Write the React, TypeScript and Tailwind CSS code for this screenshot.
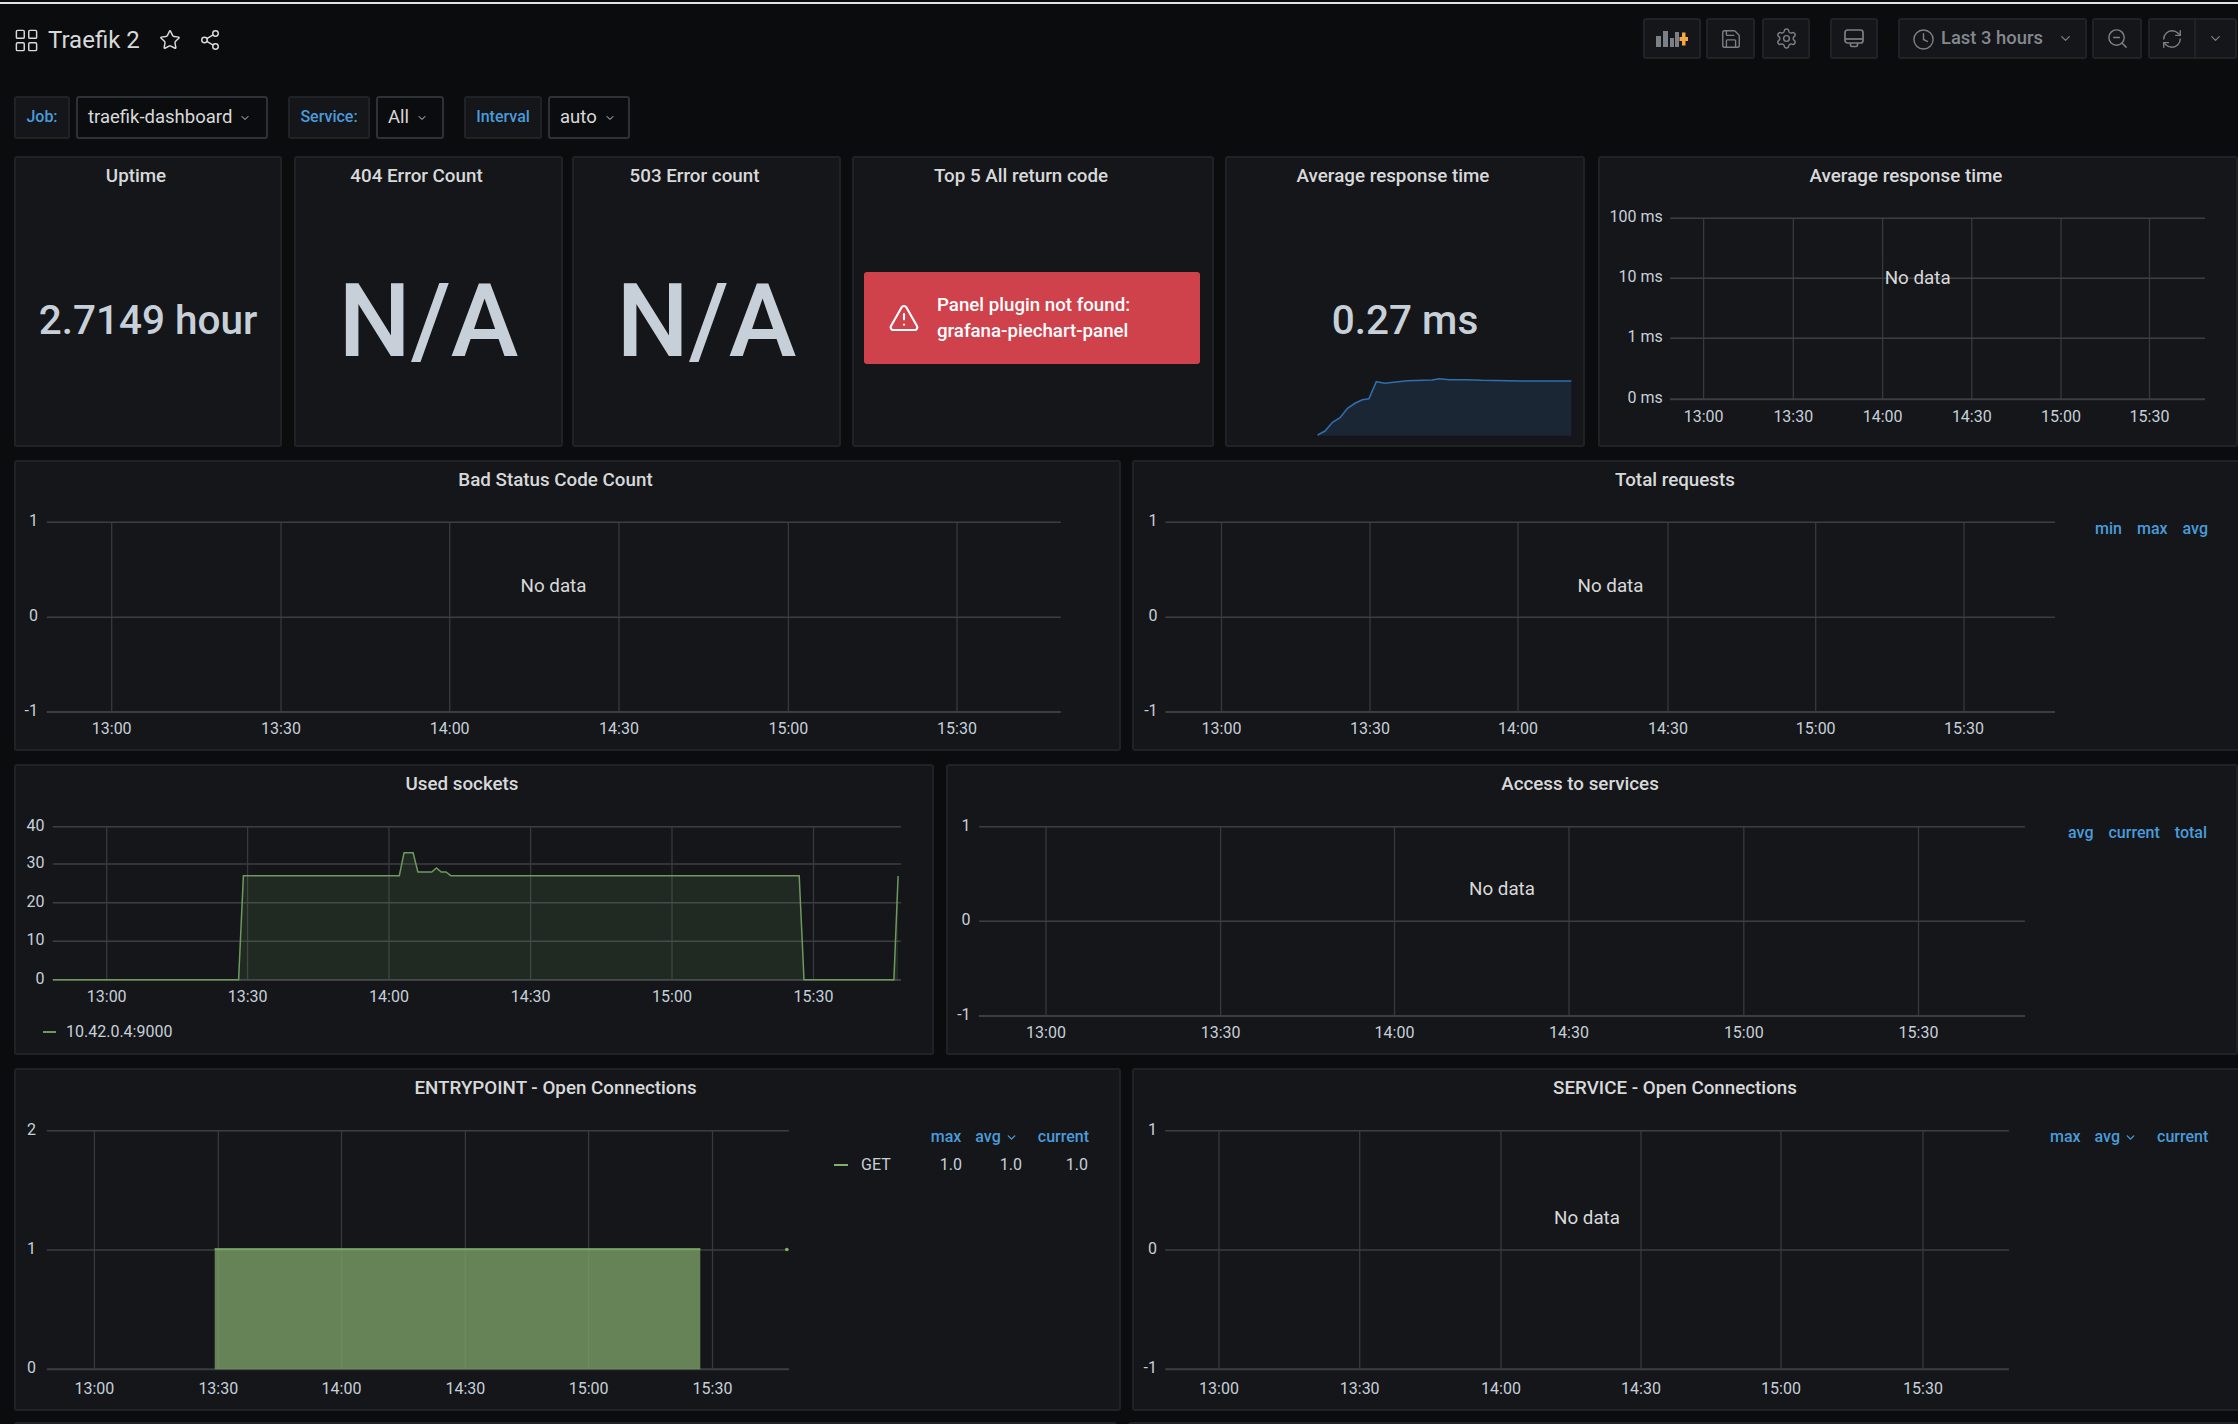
import React from 'react';
import {
  ChevronDown,
  Clock,
  LayoutGrid,
  RefreshCw,
  Save,
  Settings,
  Share2,
  Star,
  TriangleAlert,
  ZoomOut,
} from 'lucide-react';

const TIMES = ['13:00', '13:30', '14:00', '14:30', '15:00', '15:30'];

// chart coordinates are page pixels, each svg's viewBox starts where it sits on the page
const SPARK_LINE: [number, number][] = [
  [1317.6, 435], [1325, 431], [1332.5, 422.3], [1340, 417.7], [1347.5, 408.3], [1355, 403.3],
  [1362.4, 399.7], [1368.9, 398.7], [1376.3, 381.7], [1384.8, 383.3], [1407.2, 380.7], [1432, 380],
  [1439.5, 378.7], [1449.5, 379.7], [1466.9, 379.7], [1481.8, 380.3], [1521.6, 381], [1571.3, 381],
];

const SOCKETS_LINE: [number, number][] = [
  [52.8, 979.7], [238.6, 979.7], [243.4, 875.7], [399.3, 875.7], [404.1, 852.7], [413.1, 852.7],
  [417.9, 872], [431.7, 872], [436.5, 868], [441.2, 872], [446, 872], [450.8, 875.7],
  [799.2, 875.7], [804, 979.7], [893.9, 979.7], [898.1, 876],
];

const toPoints = (pts: [number, number][]) => pts.map(([x, y]) => `${x},${y}`).join(' ');

interface TimeChartProps {
  ox: number;
  oy: number;
  w: number;
  h: number;
  left: number;
  right: number;
  xs: number[];
  ys: { y: number; label: string }[];
  labelRight: number;
  labelY: number;
  noData?: [number, number];
  children?: React.ReactNode;
}

const TimeChart: React.FC<TimeChartProps> = ({ ox, oy, w, h, left, right, xs, ys, labelRight, labelY, noData, children }) => {
  const top = ys[0].y;
  const bottom = ys[ys.length - 1].y;
  return (
    <svg className="block shrink-0" width={w} height={h} viewBox={`${ox} ${oy} ${w} ${h}`}>
      {xs.map((x) => (
        <line key={x} x1={x} x2={x} y1={top} y2={bottom} stroke="#37393c" strokeWidth={1.3} />
      ))}
      {ys.map((t, i) => (
        <line
          key={t.label}
          x1={left}
          x2={right}
          y1={t.y}
          y2={t.y}
          stroke="#3c3e41"
          strokeWidth={i === ys.length - 1 ? 2 : 1.6}
        />
      ))}
      {children}
      {ys.map((t) => (
        <text key={t.label} x={labelRight} y={t.y - 1.5} textAnchor="end" dominantBaseline="central" fontSize={16} fill="#c7d0d9">
          {t.label}
        </text>
      ))}
      {xs.map((x, i) => (
        <text key={x} x={x} y={labelY} textAnchor="middle" dominantBaseline="central" fontSize={16} fill="#c7d0d9">
          {TIMES[i]}
        </text>
      ))}
      {noData && (
        <text x={noData[0]} y={noData[1]} textAnchor="middle" dominantBaseline="central" fontSize={18.8} fill="#d8d9da">
          No data
        </text>
      )}
    </svg>
  );
};

const Panel: React.FC<{ title: string; className: string; children?: React.ReactNode }> = ({ title, className, children }) => (
  <section className={`flex shrink-0 flex-col overflow-hidden rounded-[3px] border-2 border-[#202226] bg-[#141619] ${className}`}>
    <h2 className="h-[36px] shrink-0 pr-[24px] text-center text-[18.8px] font-medium leading-[36px] text-[#d8d9da]">{title}</h2>
    {children}
  </section>
);

const LegendHead: React.FC<{ items: string[]; pr: string; sorted?: boolean }> = ({ items, pr, sorted }) => (
  <div className={`flex h-[24px] items-center justify-end text-[16px] font-medium text-[#4a9bdb] ${pr}`}>
    {items.map((item) => (
      <span key={item} className={sorted && item === 'avg' ? 'ml-[14px] mr-[20px] flex items-center' : sorted && item === 'current' ? '' : item === items[0] ? '' : 'ml-[15px]'}>
        {item}
        {sorted && item === 'avg' && <ChevronDown size={13} strokeWidth={2.5} className="ml-[4px]" />}
      </span>
    ))}
  </div>
);

const ToolButton: React.FC<{ className: string; children: React.ReactNode }> = ({ className, children }) => (
  <div className={`flex h-[41px] items-center justify-center rounded-[3px] border-2 border-[#202226] bg-[#141619] text-[#7b8087] ${className}`}>
    {children}
  </div>
);

const VarLabel: React.FC<{ className: string; children: React.ReactNode }> = ({ className, children }) => (
  <div className={`flex h-[43px] items-center justify-center rounded-[3px] border-2 border-[#202226] bg-[#141619] pb-[2px] text-[16px] font-medium text-[#4a9bdb] ${className}`}>
    {children}
  </div>
);

const VarSelect: React.FC<{ className: string; children: React.ReactNode }> = ({ className, children }) => (
  <div className={`ml-[6px] flex h-[43px] items-center rounded-[3px] border-2 border-[#2c3235] bg-[#0b0c0e] pl-[10px] text-[18.5px] text-[#d8d9da] ${className}`}>
    {children}
    <ChevronDown size={12} strokeWidth={2} className="ml-[7px] text-[#c7d0d9]" />
  </div>
);

const StatValue: React.FC<{ children: React.ReactNode }> = ({ children }) => (
  <div className="mt-[101px] text-center text-[40.5px] font-medium leading-[50px] text-[#c7d0d9]">{children}</div>
);

const NotAvailable = () => (
  <div className="mt-[67px] text-center text-[102px] font-medium leading-[120px] text-[#c7d0d9]">N/A</div>
);

const AddPanelIcon = () => (
  <svg width="32" height="16" viewBox="0 0 32 16">
    <rect x="0" y="5" width="5" height="11" fill="#7b8087" />
    <rect x="7" y="0" width="5" height="16" fill="#7b8087" />
    <rect x="14" y="7" width="4" height="9" fill="#7b8087" />
    <rect x="19" y="1" width="4" height="15" fill="#7b8087" />
    <path d="M23.500 6H32v4h-8.500zM26 1.500h3.500v13H26z" fill="#f5a742" />
  </svg>
);

const CycleViewIcon = () => (
  <svg width="20" height="19" viewBox="0 0 20 19" fill="none" stroke="currentColor" strokeWidth="1.700">
    <rect x="1" y="1" width="18" height="13" rx="2.500" />
    <path d="M1 10h18" />
    <path d="M6.500 14v2a1.500 1.500 0 0 0 1.500 1.500h4a1.500 1.500 0 0 0 1.500-1.500v-2" />
  </svg>
);

export default function App() {
  return (
    <div className="flex h-[1424px] flex-col overflow-hidden bg-[#0b0c0e] font-[Roboto,sans-serif]">
      <div className="h-[2px] shrink-0 bg-[#0b0c0e]" />
      <div className="h-[2px] shrink-0 bg-[#e4e4e4]" />

      <header className="flex h-[55px] shrink-0 items-start pt-[14px]">
        <div className="ml-[16px] flex h-[44px] items-center text-[#d8d9da]">
          <LayoutGrid size={27} strokeWidth={1.3} className="-ml-[3px]" />
          <h1 className="ml-[8px] text-[24px] leading-none">Traefik 2</h1>
          <Star size={22} strokeWidth={1.6} className="ml-[19px]" />
          <Share2 size={22} strokeWidth={1.6} className="ml-[18px]" />
        </div>
        <div className="ml-auto flex pr-[1px]">
          <ToolButton className="w-[58px]"><AddPanelIcon /></ToolButton>
          <ToolButton className="ml-[5px] w-[49px]"><Save size={22} strokeWidth={1.5} /></ToolButton>
          <ToolButton className="ml-[7px] w-[48px]"><Settings size={23} strokeWidth={1.5} /></ToolButton>
          <ToolButton className="ml-[20px] w-[48px]"><CycleViewIcon /></ToolButton>
          <ToolButton className="ml-[20px] w-[189px] !justify-start pl-[12px]">
            <Clock size={23} strokeWidth={1.5} className="mt-[2px]" />
            <span className="ml-[6px] pb-[2px] text-[18.4px] font-medium text-[#85898f]">Last 3 hours</span>
            <ChevronDown size={15} strokeWidth={2} className="ml-auto mr-[12px]" />
          </ToolButton>
          <ToolButton className="ml-[5px] w-[50px]"><ZoomOut size={23} strokeWidth={1.5} /></ToolButton>
          <ToolButton className="ml-[6px] w-[48px] rounded-r-none"><RefreshCw size={22} strokeWidth={1.5} /></ToolButton>
          <ToolButton className="-ml-[2px] w-[43px] rounded-l-none"><ChevronDown size={15} strokeWidth={2} /></ToolButton>
        </div>
      </header>

      <div className="ml-[14px] mt-[37px] flex shrink-0">
        <VarLabel className="w-[56px]">Job:</VarLabel>
        <VarSelect className="w-[192px]">traefik-dashboard</VarSelect>
        <VarLabel className="ml-[20px] w-[82px]">Service:</VarLabel>
        <VarSelect className="w-[68px]">All</VarSelect>
        <VarLabel className="ml-[20px] w-[78px]">Interval</VarLabel>
        <VarSelect className="w-[82px]">auto</VarSelect>
      </div>

      <div className="mt-[17px] flex h-[291px] shrink-0">
        <Panel title="Uptime" className="ml-[14px] w-[268px]">
          <StatValue>2.7149 hour</StatValue>
        </Panel>
        <Panel title="404 Error Count" className="ml-[12px] w-[269px]">
          <NotAvailable />
        </Panel>
        <Panel title="503 Error count" className="ml-[9px] w-[269px]">
          <NotAvailable />
        </Panel>
        <Panel title="Top 5 All return code" className="ml-[11px] w-[362px]">
          <div className="ml-[10px] mt-[78px] flex h-[92px] w-[336px] items-center rounded-[3px] bg-[#cf414b] pl-[24px] text-[18.7px] font-medium leading-[26px] text-white">
            <TriangleAlert size={32} strokeWidth={1.6} />
            <div className="ml-[17px]">
              <div>Panel plugin not found:</div>
              <div>grafana-piechart-panel</div>
            </div>
          </div>
        </Panel>
        <Panel title="Average response time" className="ml-[11px] w-[360px]">
          <StatValue>0.27 ms</StatValue>
          <svg className="block shrink-0" width="356" height="100" viewBox="1227 345 356 100">
            <polygon points={`${toPoints(SPARK_LINE)} 1571.3,435.7 1317.6,435.7`} fill="#1b2634" />
            <polyline points={toPoints(SPARK_LINE)} fill="none" stroke="#2f6fad" strokeWidth={1.6} />
          </svg>
        </Panel>
        <Panel title="Average response time" className="ml-[13px] w-[640px]">
          <TimeChart
            ox={1600}
            oy={194}
            w={636}
            h={251}
            left={1670}
            right={2205}
            xs={[1703.6, 1793.3, 1882.6, 1971.8, 2061, 2149.5]}
            ys={[
              { y: 218.3, label: '100 ms' },
              { y: 278.3, label: '10 ms' },
              { y: 338.3, label: '1 ms' },
              { y: 399.3, label: '0 ms' },
            ]}
            labelRight={1662.7}
            labelY={416.7}
            noData={[1917.7, 277.7]}
          />
        </Panel>
      </div>

      <div className="mt-[13px] flex h-[291px] shrink-0">
        <Panel title="Bad Status Code Count" className="ml-[14px] w-[1107px]">
          <TimeChart
            ox={16}
            oy={498}
            w={1103}
            h={251}
            left={46.8}
            right={1060.8}
            xs={[111.7, 281, 449.7, 619, 788.4, 957]}
            ys={[
              { y: 522.3, label: '1' },
              { y: 617.3, label: '0' },
              { y: 712, label: '-1' },
            ]}
            labelRight={38}
            labelY={728.7}
            noData={[553.5, 585.7]}
          />
        </Panel>
        <Panel title="Total requests" className="ml-[11px] w-[1110px]">
          <div className="flex flex-1">
            <TimeChart
              ox={1134}
              oy={498}
              w={936}
              h={251}
              left={1165.5}
              right={2055}
              xs={[1221.5, 1370, 1518, 1668, 1815.7, 1964]}
              ys={[
                { y: 522.3, label: '1' },
                { y: 617.3, label: '0' },
                { y: 712, label: '-1' },
              ]}
              labelRight={1157.6}
              labelY={728.7}
              noData={[1610.5, 585.7]}
            />
            <div className="flex-1 pt-[19px]">
              <LegendHead items={['min', 'max', 'avg']} pr="pr-[32px]" />
            </div>
          </div>
        </Panel>
      </div>

      <div className="mt-[13px] flex h-[291px] shrink-0">
        <Panel title="Used sockets" className="ml-[14px] w-[920px]">
          <TimeChart
            ox={16}
            oy={802}
            w={916}
            h={251}
            left={52.8}
            right={901}
            xs={[106.7, 247.6, 389, 530.6, 672, 813.5]}
            ys={[
              { y: 826.7, label: '40' },
              { y: 864, label: '30' },
              { y: 902.7, label: '20' },
              { y: 941.3, label: '10' },
              { y: 980, label: '0' },
            ]}
            labelRight={44.4}
            labelY={996.7}
          >
            <polygon points={`${toPoints(SOCKETS_LINE)} 898.1,980 52.8,980`} fill="#7eb26d" opacity={0.12} />
            <polyline points={toPoints(SOCKETS_LINE)} fill="none" stroke="#6f9a5e" strokeWidth={1.5} />
            <line x1={43} x2={56} y1={1032} y2={1032} stroke="#6f9a5e" strokeWidth={2} />
            <text x={66} y={1031} dominantBaseline="central" fontSize={16} fill="#c7d0d9">10.42.0.4:9000</text>
          </TimeChart>
        </Panel>
        <Panel title="Access to services" className="ml-[12px] w-[1292px]">
          <div className="flex flex-1">
            <TimeChart
              ox={948}
              oy={802}
              w={1100}
              h={251}
              left={979}
              right={2025}
              xs={[1046, 1220.6, 1394.5, 1569, 1743.8, 1918.5]}
              ys={[
                { y: 826.7, label: '1' },
                { y: 921.3, label: '0' },
                { y: 1016, label: '-1' },
              ]}
              labelRight={970.6}
              labelY={1032.7}
              noData={[1502, 889]}
            />
            <div className="flex-1 pt-[19px]">
              <LegendHead items={['avg', 'current', 'total']} pr="pr-[29px]" />
            </div>
          </div>
        </Panel>
      </div>

      <div className="mt-[13px] flex h-[343px] shrink-0">
        <Panel title="ENTRYPOINT - Open Connections" className="ml-[14px] w-[1107px]">
          <div className="flex flex-1">
            <TimeChart
              ox={16}
              oy={1106}
              w={784}
              h={303}
              left={46.8}
              right={789}
              xs={[94.4, 218.3, 341.5, 465.4, 588.6, 712.5]}
              ys={[
                { y: 1130.7, label: '2' },
                { y: 1250, label: '1' },
                { y: 1369.3, label: '0' },
              ]}
              labelRight={36}
              labelY={1388}
            >
              <rect x={214.7} y={1248.7} width={485.6} height={120.6} fill="#7b9f68" opacity={0.8} />
              <line x1={214.7} x2={700.3} y1={1249} y2={1249} stroke="#7eb26d" strokeWidth={1.5} />
              <circle cx={786.8} cy={1249.5} r={1.8} fill="#7eb26d" />
            </TimeChart>
            <div className="flex-1 pt-[19px]">
              <LegendHead items={['max', 'avg', 'current']} pr="pr-[30px]" sorted />
              <div className="mt-[4px] flex h-[24px] items-center pl-[34px] text-[16px] text-[#c7d0d9]">
                <span className="h-[2px] w-[14px] bg-[#7eb26d]" />
                <span className="ml-[13px] w-[78px]">GET</span>
                <span className="w-[23px] text-right">1.0</span>
                <span className="w-[60px] text-right">1.0</span>
                <span className="w-[66px] text-right">1.0</span>
              </div>
            </div>
          </div>
        </Panel>
        <Panel title="SERVICE - Open Connections" className="ml-[11px] w-[1110px]">
          <div className="flex flex-1">
            <TimeChart
              ox={1134}
              oy={1106}
              w={916}
              h={303}
              left={1165.3}
              right={2009}
              xs={[1219, 1359.7, 1501, 1641, 1781, 1923]}
              ys={[
                { y: 1130.7, label: '1' },
                { y: 1250, label: '0' },
                { y: 1369.3, label: '-1' },
              ]}
              labelRight={1157}
              labelY={1388}
              noData={[1587, 1217.7]}
            />
            <div className="flex-1 pt-[19px]">
              <LegendHead items={['max', 'avg', 'current']} pr="pr-[32px]" sorted />
            </div>
          </div>
        </Panel>
      </div>

      <div className="mt-[11px] flex h-[40px] shrink-0">
        <div className="ml-[14px] w-[1107px] rounded-[3px] border-2 border-[#202226] bg-[#141619]" />
        <div className="ml-[11px] w-[1110px] shrink-0 rounded-[3px] border-2 border-[#202226] bg-[#141619]" />
      </div>
    </div>
  );
}
